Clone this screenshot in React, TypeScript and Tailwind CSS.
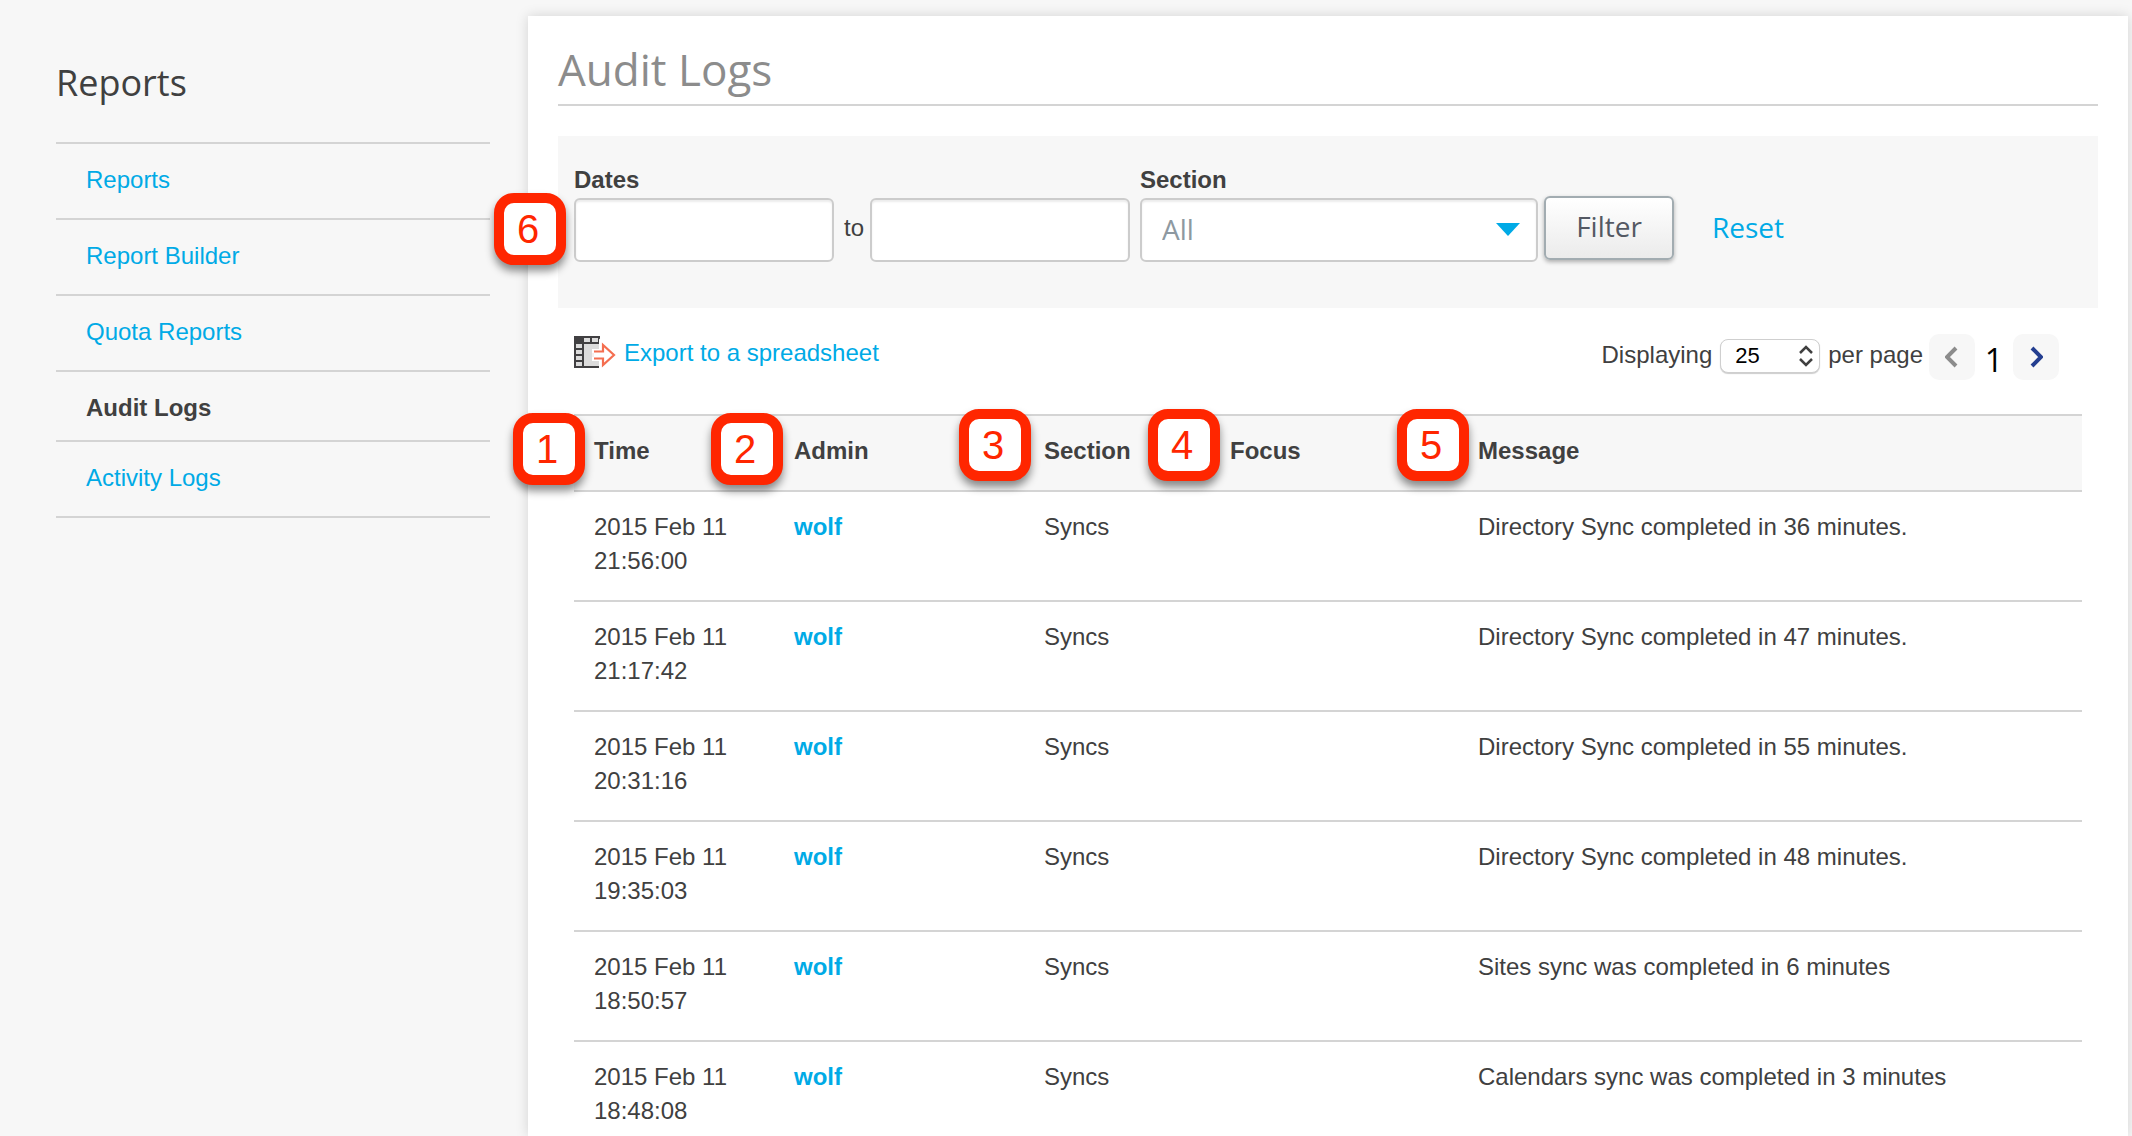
import React, { useState } from "react";

interface LogEntry {
  date: string;
  time: string;
  admin: string;
  section: string;
  focus: string;
  message: string;
}

const navItems = ["Reports", "Report Builder", "Quota Reports", "Audit Logs", "Activity Logs"];

const columns = [
  { label: "Time", width: "w-[200px]", marker: "1", place: "-left-[61px] -top-[3px]" },
  { label: "Admin", width: "w-[250px]", marker: "2", place: "-left-[63px] -top-[3px]" },
  { label: "Section", width: "w-[186px]", marker: "3", place: "-left-[65px] -top-[7px]" },
  { label: "Focus", width: "w-[248px]", marker: "4", place: "-left-[62px] -top-[7px]" },
  { label: "Message", width: "", marker: "5", place: "-left-[61px] -top-[7px]" },
];

const logs: LogEntry[] = [
  { date: "2015 Feb 11", time: "21:56:00", admin: "wolf", section: "Syncs", focus: "", message: "Directory Sync completed in 36 minutes." },
  { date: "2015 Feb 11", time: "21:17:42", admin: "wolf", section: "Syncs", focus: "", message: "Directory Sync completed in 47 minutes." },
  { date: "2015 Feb 11", time: "20:31:16", admin: "wolf", section: "Syncs", focus: "", message: "Directory Sync completed in 55 minutes." },
  { date: "2015 Feb 11", time: "19:35:03", admin: "wolf", section: "Syncs", focus: "", message: "Directory Sync completed in 48 minutes." },
  { date: "2015 Feb 11", time: "18:50:57", admin: "wolf", section: "Syncs", focus: "", message: "Sites sync was completed in 6 minutes" },
  { date: "2015 Feb 11", time: "18:48:08", admin: "wolf", section: "Syncs", focus: "", message: "Calendars sync was completed in 3 minutes" },
];

const Marker: React.FC<{ value: string; place: string }> = ({ value, place }) => (
  <span
    className={`absolute z-10 flex size-[72px] items-center justify-center rounded-[20px] border-[10px] border-[#ff2600] bg-white pr-1 text-[40px] leading-none font-normal text-[#ff2600] shadow-[0_6px_8px_rgba(0,0,0,0.45)] ${place}`}
  >
    {value}
  </span>
);

const ExportIcon: React.FC = () => (
  <svg width="42" height="32" viewBox="0 0 42 32" aria-hidden="true">
    <path d="M0 0h26v32H0z" fill="#414042" />
    <path d="M10 8h16v22H10z" fill="#dcdcdc" />
    <path d="M10 2h6v4h-6zM18 2h6v4h-6zM2 8h6v4H2zM2 14h6v4H2zM2 20h6v4H2zM2 26h6v4H2z" fill="#dcdcdc" />
    <path d="M18 15h9V7l13 12-13 12v-8h-9" fill="#f7f0ee" stroke="#fff" strokeWidth="4" />
    <path d="M20 15.500h9V9l11 10-11 10v-6.500h-9" fill="#fff" stroke="#f46e50" strokeWidth="2.200" />
  </svg>
);

const App: React.FC = () => {
  const [from, setFrom] = useState("");
  const [to, setTo] = useState("");
  const [section, setSection] = useState("All");
  const [perPage, setPerPage] = useState("25");

  const handleReset = () => {
    setFrom("");
    setTo("");
    setSection("All");
  };

  const fieldClass =
    "h-16 rounded-[6px] border-2 border-[#cccccc] bg-white shadow-[inset_0_2px_2px_rgba(0,0,0,0.08)] outline-none";

  return (
    <div className="flex h-screen overflow-hidden bg-[#f7f7f7] pr-1 font-['Liberation_Sans',Arial,sans-serif] text-[24px] leading-[34px] text-[#404040]">
      <aside className="w-[528px] shrink-0 pt-[58px] pr-[38px] pl-14">
        <h2 className="font-['Open_Sans',sans-serif] text-[36px] leading-[50px]">Reports</h2>
        <ul className="mt-[34px] border-t-2 border-[#d4d4d4]">
          {navItems.map((item) => (
            <li key={item} className="border-b-2 border-[#d4d4d4]">
              {item === "Audit Logs" ? (
                <strong className="block px-[30px] pt-[19px] pb-[15px]">{item}</strong>
              ) : (
                <a href="#" className="block px-[30px] pt-[19px] pb-[21px] text-[#00aae6]">
                  {item}
                </a>
              )}
            </li>
          ))}
        </ul>
      </aside>

      <main className="mt-4 min-w-0 grow bg-white px-[30px] pt-6 shadow-[0_0_12px_rgba(0,0,0,0.15)]">
        <h1 className="border-b-2 border-[#d4d4d4] pb-[6px] font-['Open_Sans',sans-serif] text-[44px] leading-[58px] text-[#8c8c8c]">
          Audit Logs
        </h1>

        <form className="mt-[30px] flex h-[172px] items-start bg-[#f7f7f7] px-4 pt-[27px]" onSubmit={(e) => e.preventDefault()}>
          <div className="relative">
            <Marker value="6" place="-left-20 top-[30px]" />
            <label htmlFor="from" className="block pb-px font-bold">
              Dates
            </label>
            <div className="flex items-center">
              <input id="from" value={from} onChange={(e) => setFrom(e.target.value)} className={`${fieldClass} w-[260px] px-4`} />
              <label htmlFor="to" className="w-9 pb-1 pl-1 text-center">
                to
              </label>
              <input id="to" value={to} onChange={(e) => setTo(e.target.value)} className={`${fieldClass} w-[260px] px-4`} />
            </div>
          </div>

          <div className="ml-[10px]">
            <label htmlFor="section" className="block pb-px font-bold">
              Section
            </label>
            <div className="relative">
              <select
                id="section"
                value={section}
                onChange={(e) => setSection(e.target.value)}
                className={`${fieldClass} w-[398px] appearance-none px-5 pb-[3px] font-['Open_Sans',sans-serif] text-[28px] text-[#8e99a1]`}
              >
                <option>All</option>
                <option>Syncs</option>
              </select>
              <svg className="pointer-events-none absolute top-[25px] right-[18px]" width="24" height="13" viewBox="0 0 24 13" aria-hidden="true">
                <path d="M0 0h24L12 13z" fill="#00aae6" />
              </svg>
            </div>
          </div>

          <button
            type="submit"
            className="mt-[33px] ml-[6px] h-16 w-[130px] rounded-[6px] border-2 border-[#a2acb1] bg-linear-to-b from-white to-[#ebebeb] pb-1 font-['Open_Sans',sans-serif] text-[28px] text-[#545963] shadow-[0_2px_4px_rgba(0,0,0,0.3)]"
          >
            Filter
          </button>
          <a
            href="#"
            onClick={handleReset}
            className="mt-[33px] ml-[38px] font-['Open_Sans',sans-serif] text-[28px] leading-[62px] text-[#00aae6]"
          >
            Reset
          </a>
        </form>

        <div className="px-4">
          <div className="flex h-[106px] items-start justify-between pt-[26px]">
            <a href="#" className="flex items-start gap-2 text-[#00aae6]">
              <span className="pt-[2px]">
                <ExportIcon />
              </span>
              <span className="pt-[2px]">Export to a spreadsheet</span>
            </a>
            <div className="flex items-start pr-[23px]">
              <label htmlFor="per-page" className="pt-1 pr-2">
                Displaying
              </label>
              <div className="relative pt-[5px]">
                <select
                  id="per-page"
                  value={perPage}
                  onChange={(e) => setPerPage(e.target.value)}
                  className="block h-[34px] w-[100px] appearance-none rounded-[8px] border border-[#cfcfcf] bg-white pl-[14px] text-[22px] leading-[30px] text-black shadow-[0_1px_1px_rgba(0,0,0,0.2)] outline-none"
                >
                  <option>25</option>
                  <option>50</option>
                </select>
                <svg className="pointer-events-none absolute top-[11px] right-[7px]" width="14" height="22" viewBox="0 0 14 22" fill="none" stroke="#404040" strokeWidth="2.500" aria-hidden="true">
                  <path d="M1 8l6-6 6 6M1 14l6 6 6-6" />
                </svg>
              </div>
              <span className="pt-1 pr-[6px] pl-2">per page</span>
              <button type="button" aria-label="Previous page" className="flex size-[46px] items-center justify-center rounded-[10px] bg-[#f7f7f7]">
                <svg width="14" height="22" viewBox="0 0 14 22" fill="none" stroke="#8c8c8c" strokeWidth="4" aria-hidden="true">
                  <path d="M11 2l-9 9 9 9" />
                </svg>
              </button>
              <span className="w-[38px] pt-[9px] text-center font-['Open_Sans',sans-serif] text-[32px] text-black">1</span>
              <button type="button" aria-label="Next page" className="flex size-[46px] items-center justify-center rounded-[10px] bg-[#f7f7f7]">
                <svg width="14" height="22" viewBox="0 0 14 22" fill="none" stroke="#243e90" strokeWidth="4" aria-hidden="true">
                  <path d="M3 2l9 9-9 9" />
                </svg>
              </button>
            </div>
          </div>

          <table className="w-full table-fixed border-separate border-spacing-0 text-left">
            <thead>
              <tr>
                {columns.map((col) => (
                  <th
                    key={col.label}
                    className={`relative border-y-2 border-[#d4d4d4] bg-[#f7f7f7] px-5 pt-[18px] pb-[22px] font-bold ${col.width}`}
                  >
                    <Marker value={col.marker} place={col.place} />
                    {col.label}
                  </th>
                ))}
              </tr>
            </thead>
            <tbody>
              {logs.map((log) => (
                <tr key={log.time} className="align-top *:border-b-2 *:border-[#d4d4d4] *:px-5 *:pt-[18px] *:pb-[22px]">
                  <td>
                    {log.date}
                    <br />
                    {log.time}
                  </td>
                  <td>
                    <a href="#" className="font-bold text-[#00aae6]">
                      {log.admin}
                    </a>
                  </td>
                  <td>{log.section}</td>
                  <td>{log.focus}</td>
                  <td>{log.message}</td>
                </tr>
              ))}
            </tbody>
          </table>
        </div>
      </main>
    </div>
  );
};

export default App;
